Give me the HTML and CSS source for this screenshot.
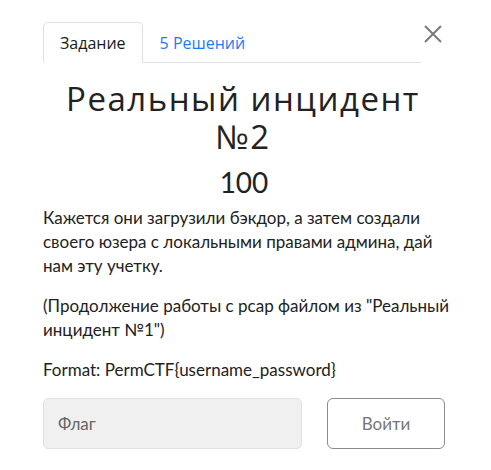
FILE: index.html
```html
<!DOCTYPE html>
<html lang="ru">
<head>
<meta charset="utf-8">
<link rel="stylesheet" href="styles.css">
</head>
<body>
<div class="modal">
  <div class="header">
    <ul class="tabs">
      <li class="tab active">Задание</li>
      <li class="tab link">5 Решений</li>
    </ul>
    <button class="close" aria-label="Закрыть">
      <svg width="18" height="18" viewBox="0 0 18 18"><path d="M1 1 L17 17 M17 1 L1 17" stroke="#7a7a7a" stroke-width="2" fill="none"/></svg>
    </button>
  </div>
  <div class="content">
    <h2 class="title">Реальный инцидент №2</h2>
    <h3 class="value">100</h3>
    <p class="desc">Кажется они загрузили бэкдор, а затем создали своего юзера с локальными правами админа, дай нам эту учетку.</p>
    <p class="desc">(Продолжение работы с pcap файлом из "Реальный инцидент №1")</p>
    <p class="desc">Format: PermCTF{username_password}</p>
    <form class="submit">
      <input class="flag" type="text" placeholder="Флаг">
      <button class="go" type="button">Войти</button>
    </form>
  </div>
</div>
</body>
</html>
```
FILE: styles.css
```css
* { box-sizing: border-box; }
html, body { margin: 0; padding: 0; background: #fff; }
body { font-family: "Lato", "Open Sans", sans-serif; color: #212529; }
.modal { width: 491px; height: 470px; padding: 22px 0 0 43px; }
.header { display: flex; align-items: flex-start; }
.tabs {
  list-style: none; margin: 0; padding: 0; display: flex;
  width: 378px; border-bottom: 1px solid #dee2e6;
  font-family: "Open Sans", sans-serif; font-size: 16px;
}
.tab { padding: 9px 16px 10px; height: 41px; line-height: 22px; margin-bottom: -1px; border: 1px solid transparent; border-radius: 5px 5px 0 0; }
.tab.active { color: #1a1a1a; border-color: #dee2e6 #dee2e6 #fff; background: #fff; }
.tab.link { color: #1a7cf5; }
.close { border: 0; background: none; padding: 0; margin: 3px 0 0 3px; width: 18px; height: 18px; display: flex; }
.content { width: 402px; }
.title {
  margin: 17px 0 0 0; text-align: center; font-family: "Open Sans", sans-serif;
  font-weight: 400; font-size: 33px; letter-spacing: 1.5px; line-height: 38px; color: #222;
  padding-right: 2px;
}
.value { margin: 9px 0 0 0; text-align: center; font-weight: 400; font-size: 28px; line-height: 34px; color: #222; }
.desc { margin: 0 0 16px; font-size: 17px; line-height: 24px; color: #222; width: 412px; }
.value + .desc { margin-top: 7px; }
.submit { display: flex; gap: 25px; margin-top: 0; }
.flag {
  width: 259px; height: 51px; border: 1px solid #e2e2e2; border-radius: 5px; background: #f0f0f0;
  padding: 0 14px; font-family: "Lato", sans-serif; font-size: 17px; color: #444;
}
.flag::placeholder { color: #666; }
.go {
  width: 118px; height: 51px; border: 1px solid #8a8a8a; border-radius: 6px; background: #fff;
  font-family: "Lato", sans-serif; font-size: 17px; color: #777;
}
```
